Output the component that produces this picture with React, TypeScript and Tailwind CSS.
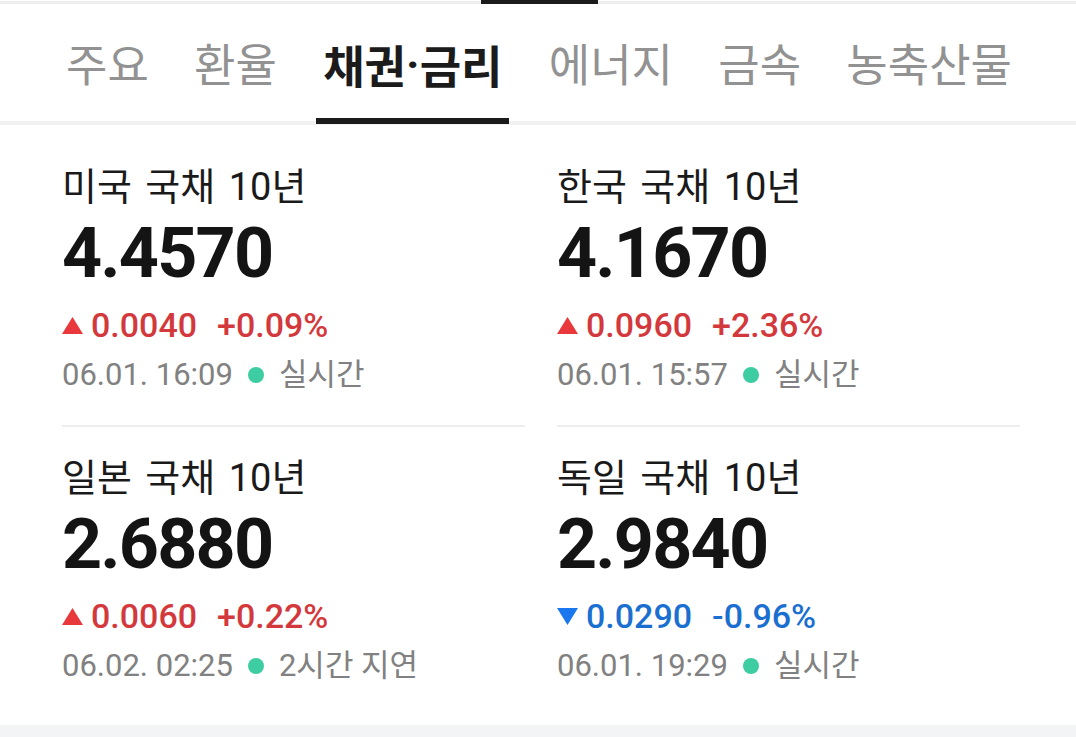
import React from "react";

type Quote = {
	name: string;
	price: string;
	diff: string;
	rate: string;
	up: boolean;
	time: string;
	status: string;
};

const tabs = ["주요", "환율", "채권·금리", "에너지", "금속", "농축산물"];

const quotes: Quote[] = [
	{ name: "미국 국채 10년", price: "4.4570", diff: "0.0040", rate: "+0.09%", up: true, time: "06.01. 16:09", status: "실시간" },
	{ name: "한국 국채 10년", price: "4.1670", diff: "0.0960", rate: "+2.36%", up: true, time: "06.01. 15:57", status: "실시간" },
	{ name: "일본 국채 10년", price: "2.6880", diff: "0.0060", rate: "+0.22%", up: true, time: "06.02. 02:25", status: "2시간 지연" },
	{ name: "독일 국채 10년", price: "2.9840", diff: "0.0290", rate: "-0.96%", up: false, time: "06.01. 19:29", status: "실시간" },
];

function Arrow({ up }: { up: boolean }) {
	return (
		<svg width="21" height="17" viewBox="0 0 21 17" className="mr-[8px] shrink-0">
			{up ? <polygon points="10.5,0 21,17 0,17" fill="#e8383b" /> : <polygon points="0,0 21,0 10.5,17" fill="#1a77ee" />}
		</svg>
	);
}

function TabLabel({ text }: { text: string }) {
	if (!text.includes("·")) return <>{text}</>;
	const [a, b] = text.split("·");
	return (
		<>
			{a}
			<span style={{ fontFamily: "Roboto, sans-serif" }}>·</span>
			{b}
		</>
	);
}

function QuoteCard({ q, first }: { q: Quote; first: boolean }) {
	return (
		<div className={`flex flex-col ${first ? "pt-[29px] pb-[30px] border-b-2 border-[#eeeeee]" : "pt-[29px] pb-[30px]"}`}>
			<div className="text-[38px] leading-[44px] text-[#1a1a1a] [word-spacing:4px]">{q.name}</div>
			<div className="mt-[6px] text-[70px] leading-[76px] font-bold text-[#141414] tracking-[-1.8px]">{q.price}</div>
			<div className={`mt-[14px] flex items-center h-[40px] text-[34px] font-medium ${q.up ? "text-[#d3393c]" : "text-[#1a6fd0]"}`}>
				<Arrow up={q.up} />
				<span>{q.diff}</span>
				<span className="ml-[20px]">{q.rate}</span>
			</div>
			<div className="mt-[10px] flex items-center h-[40px] text-[31px] text-[#818181]">
				<span>{q.time}</span>
				<span className="mx-[15px] w-[16px] h-[16px] rounded-full bg-[#3ecda2]" />
				<span>{q.status}</span>
			</div>
		</div>
	);
}

export default function App() {
	return (
		<div className="w-[1076px] h-[737px] bg-white overflow-hidden flex flex-col" style={{ fontFamily: 'Roboto, "Noto Sans CJK KR", sans-serif' }}>
			<div className="flex h-[5px] shrink-0">
				<div className="w-[481px] mt-[1px] h-[3px] bg-[#eeeeee]" />
				<div className="w-[117px] h-[4px] bg-[#1b1b1b]" />
				<div className="flex-1 mt-[1px] h-[3px] bg-[#eeeeee]" />
			</div>

			<nav className="flex items-stretch justify-between h-[120px] pl-[60px] pr-[58px] border-b-4 border-[#f1f1f1] shrink-0" style={{ fontFamily: '"Noto Sans CJK KR", sans-serif' }}>
				{tabs.map((tab) => {
					const active = tab === "채권·금리";
					return (
						<div
							key={tab}
							className={`flex items-center px-[6px] text-[45px] ${active ? "font-bold text-[#1b1b1b] border-b-[6px] border-[#1b1b1b] -mb-[3px] pt-[6px] px-[7px]" : "text-[#929292]"}`}
						>
							<TabLabel text={tab} />
						</div>
					);
				})}
			</nav>

			<div className="grid grid-cols-2 gap-x-[32px] pl-[62px] pr-[56px] pt-[11px] pb-[9px]">
				{quotes.map((q, i) => (
					<QuoteCard key={q.name} q={q} first={i < 2} />
				))}
			</div>

			<div className="flex-1 bg-[#f2f4f5]" />
		</div>
	);
}
